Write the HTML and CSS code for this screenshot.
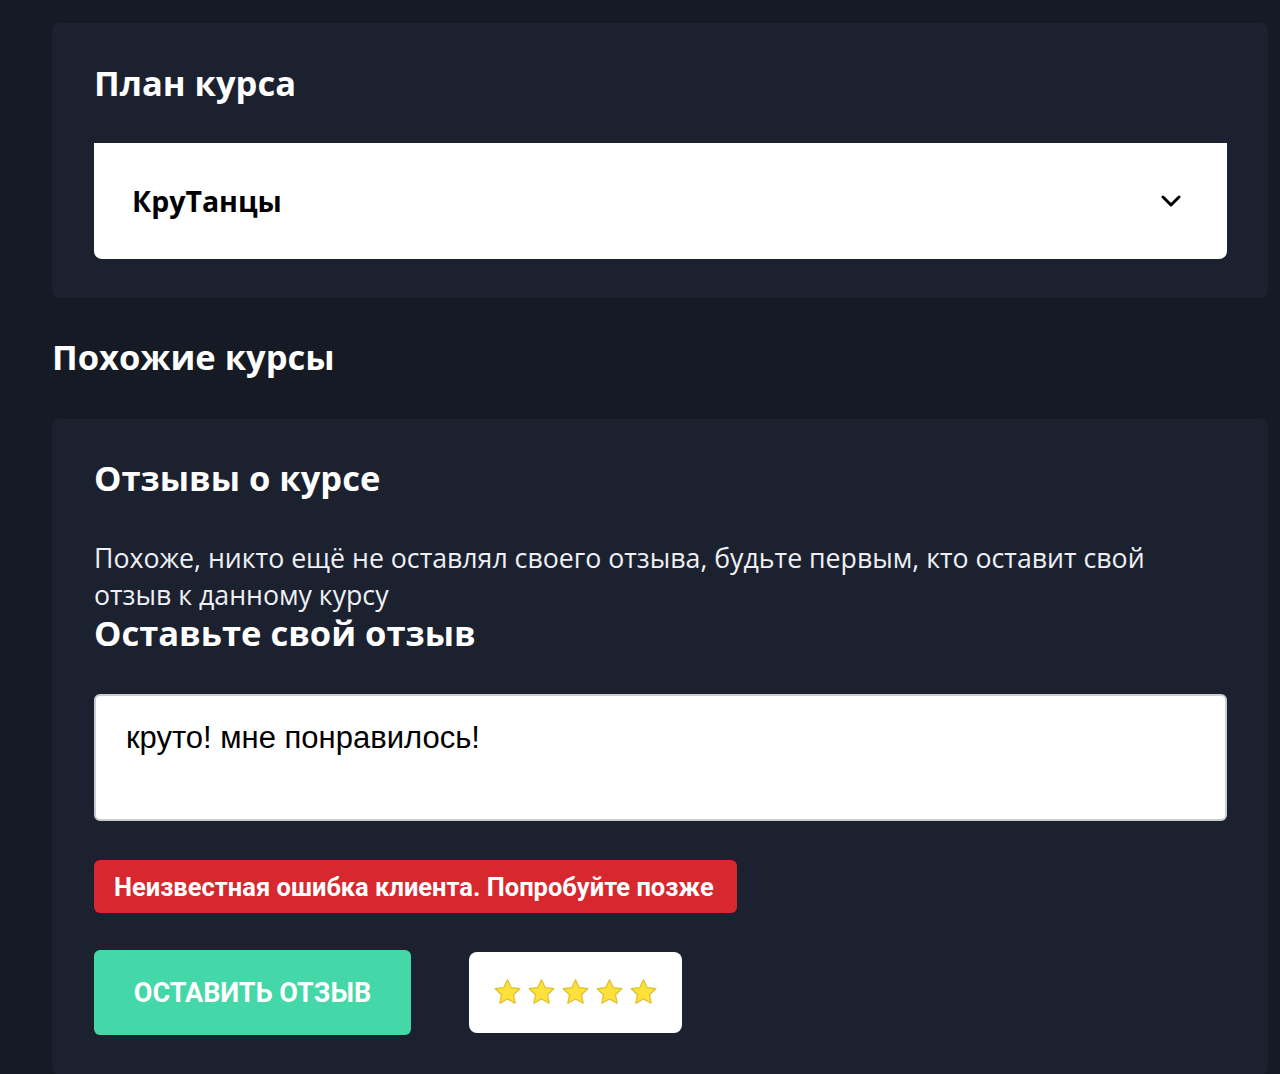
FILE: index.html
```html
<!DOCTYPE html>
<html lang="ru">
<head>
<meta charset="utf-8">
<title>Курс</title>
<link rel="stylesheet" href="styles.css">
</head>
<body>
<main class="page">
  <section class="card plan">
    <h2 class="card-title">План курса</h2>
    <div class="accordion">
      <span class="accordion-title">КруТанцы</span>
      <svg class="chevron" width="20" height="14" viewBox="0 0 20 14"><polyline points="2,3 10,11 18,3" fill="none" stroke="#000" stroke-width="3" stroke-linecap="round" stroke-linejoin="round"/></svg>
    </div>
  </section>

  <h2 class="section-title">Похожие курсы</h2>

  <section class="card reviews">
    <h2 class="card-title">Отзывы о курсе</h2>
    <p class="empty">Похоже, никто ещё не оставлял своего отзыва, будьте первым, кто оставит свой отзыв к данному курсу</p>
    <h2 class="form-title">Оставьте свой отзыв</h2>
    <div class="textarea">круто! мне понравилось!</div>
    <div class="error">Неизвестная ошибка клиента. Попробуйте позже</div>
    <div class="actions">
      <button class="submit">ОСТАВИТЬ ОТЗЫВ</button>
      <div class="stars">
        <svg viewBox="0 0 24 24" class="star"><path d="M12 2.2l2.9 6.1 6.6.8-4.9 4.6 1.3 6.6L12 17l-5.9 3.3 1.3-6.6-4.9-4.6 6.6-.8z"/></svg>
        <svg viewBox="0 0 24 24" class="star"><path d="M12 2.2l2.9 6.1 6.6.8-4.9 4.6 1.3 6.6L12 17l-5.9 3.3 1.3-6.6-4.9-4.6 6.6-.8z"/></svg>
        <svg viewBox="0 0 24 24" class="star"><path d="M12 2.2l2.9 6.1 6.6.8-4.9 4.6 1.3 6.6L12 17l-5.9 3.3 1.3-6.6-4.9-4.6 6.6-.8z"/></svg>
        <svg viewBox="0 0 24 24" class="star"><path d="M12 2.2l2.9 6.1 6.6.8-4.9 4.6 1.3 6.6L12 17l-5.9 3.3 1.3-6.6-4.9-4.6 6.6-.8z"/></svg>
        <svg viewBox="0 0 24 24" class="star"><path d="M12 2.2l2.9 6.1 6.6.8-4.9 4.6 1.3 6.6L12 17l-5.9 3.3 1.3-6.6-4.9-4.6 6.6-.8z"/></svg>
      </div>
    </div>
  </section>
</main>
</body>
</html>
```

FILE: styles.css
```css
html, body {
  margin: 0;
  padding: 0;
  background: #151a24;
}
body {
  font-family: "Open Sans", "Noto Sans", sans-serif;
  color: #fff;
}
.page {
  padding: 23px 12px 0 52px;
}
.card {
  background: #1c2130;
  border-radius: 8px;
}
.plan {
  padding: 38px 41px 39px 42px;
}
.card-title, .section-title, .form-title {
  margin: 0;
  font-size: 34.5px;
  font-weight: 700;
  line-height: 44px;
  color: #fff;
}
.accordion {
  margin-top: 38px;
  height: 116px;
  background: #fff;
  border-radius: 0 0 8px 8px;
  display: flex;
  align-items: center;
  justify-content: space-between;
  padding: 0 46px 0 38px;
  box-sizing: border-box;
}
.accordion-title {
  color: #000;
  font-size: 28.5px;
  font-weight: 700;
}
.section-title {
  margin: 37px 0 40px;
}
.reviews {
  padding: 37px 41px 40px 42px;
}
.empty {
  margin: 39px 0 0;
  font-size: 26.7px;
  line-height: 37px;
  color: #eef0f3;
}
.form-title {
  margin-top: 1px;
  line-height: 37px;
}
.textarea {
  margin-top: 43px;
  height: 127px;
  box-sizing: border-box;
  background: #fff;
  border: 2px solid #c9ccd1;
  border-radius: 6px;
  padding: 22px 30px;
  font-family: "Liberation Sans", Arial, sans-serif;
  font-size: 31px;
  line-height: 40px;
  color: #000;
}
.error {
  margin-top: 39px;
  display: inline-flex;
  align-items: center;
  height: 53px;
  padding: 0 23px 0 20px;
  box-sizing: border-box;
  background: #d7282f;
  border-radius: 6px;
  font-family: Roboto, sans-serif;
  font-weight: 700;
  font-size: 25.5px;
  color: #fff;
}
.actions {
  margin-top: 37px;
  display: flex;
  align-items: center;
  gap: 58px;
}
.submit {
  width: 317px;
  height: 85px;
  border: none;
  border-radius: 6px;
  background: #44d7a8;
  color: #fff;
  font-family: Roboto, sans-serif;
  font-weight: 700;
  font-size: 27px;
  padding: 0;
}
.stars {
  width: 213px;
  height: 81px;
  box-sizing: border-box;
  background: #fff;
  border-radius: 8px;
  display: flex;
  align-items: center;
  justify-content: center;
  gap: 3px;
}
.star {
  width: 31px;
  height: 31px;
  fill: #fde23b;
  stroke: #e3bf2a;
  stroke-width: 1;
  stroke-linejoin: round;
}
```
